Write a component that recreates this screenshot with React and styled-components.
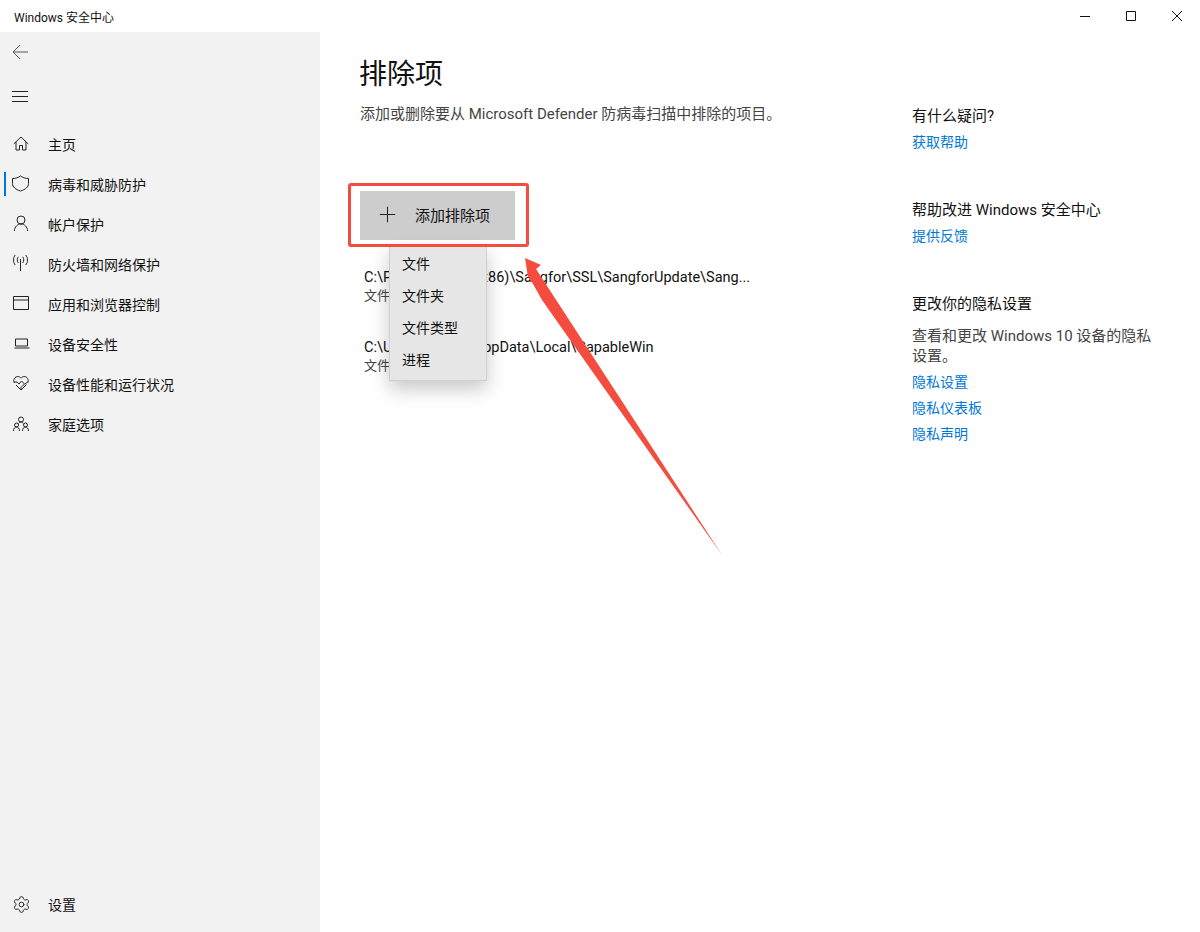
import React from "react";
import styled, { createGlobalStyle } from "styled-components";
import { Settings } from "lucide-react";

const GlobalStyle = createGlobalStyle`
  html, body {
    margin: 0;
    padding: 0;
    background: #fff;
  }
  body {
    font-family: Roboto, "Noto Sans CJK SC", sans-serif;
    color: #1a1a1a;
  }
`;

const Window = styled.div`
  position: relative;
  width: 1200px;
  height: 932px;
  display: flex;
  flex-direction: column;
  overflow: hidden;
  background: #fff;
`;

const TitleBar = styled.div`
  height: 32px;
  flex: none;
  display: flex;
  align-items: center;
  justify-content: space-between;
  padding-left: 14px;
`;

const TitleText = styled.span`
  font-size: 12px;
  color: #111;
`;

const WindowControls = styled.div`
  display: flex;
`;

const ControlButton = styled.div`
  width: 46px;
  height: 32px;
  display: flex;
  align-items: center;
  justify-content: center;
`;

const Body = styled.div`
  flex: 1;
  display: flex;
  min-height: 0;
`;

const Sidebar = styled.nav`
  width: 320px;
  flex: none;
  background: #f2f2f2;
  display: flex;
  flex-direction: column;
  padding-bottom: 7px;
  box-sizing: border-box;
`;

const IconRow = styled.div`
  height: 40px;
  display: flex;
  align-items: center;
  padding-left: 12px;
  margin-bottom: ${(p) => p.$gap || 0}px;
`;

const NavList = styled.div`
  display: flex;
  flex-direction: column;
  margin-top: 8px;
`;

const NavItem = styled.div`
  position: relative;
  height: 40px;
  display: flex;
  align-items: center;
  gap: 16px;
  padding-left: 12px;
  font-size: 14px;
  color: #111;
  ${(p) =>
    p.$active &&
    `
    &::before {
      content: "";
      position: absolute;
      left: 4px;
      top: 8px;
      width: 2px;
      height: 24px;
      background: #0078d7;
    }
  `}
`;

const NavFooter = styled(NavItem)`
  margin-top: auto;
  margin-bottom: 1px;
`;

const GearIcon = styled(Settings)`
  flex: none;
  margin-right: 1px;
`;

const Main = styled.main`
  flex: 1;
  display: flex;
  justify-content: space-between;
  padding: 18px 0 0 40px;
  min-width: 0;
`;

const Content = styled.div`
  width: 480px;
  display: flex;
  flex-direction: column;
`;

const Heading = styled.h1`
  margin: 0 0 0 -1px;
  font-size: 28px;
  font-weight: 400;
  line-height: 50px;
  color: #111;
`;

const Subtitle = styled.p`
  margin: 4px 0 0;
  font-size: 15px;
  line-height: 20px;
  color: #444;
  white-space: nowrap;
`;

const AddButton = styled.div`
  margin-top: 67px;
  width: 155px;
  height: 49px;
  display: flex;
  align-items: center;
  gap: 19px;
  padding: 0 0 2px 19px;
  box-sizing: border-box;
  background: #cdcdcd;
  font-size: 15px;
  color: #111;
`;

const ExclusionList = styled.div`
  display: flex;
  flex-direction: column;
  gap: 34px;
  margin-top: 28px;
  padding-left: 4px;
`;

const Exclusion = styled.div`
  display: flex;
  flex-direction: column;
`;

const ExclusionPath = styled.span`
  font-size: 14.5px;
  line-height: 20px;
  color: #111;
  white-space: nowrap;
`;

const ExclusionKind = styled.span`
  font-size: 13px;
  line-height: 16px;
  color: #444;
`;

const Aside = styled.aside`
  width: 288px;
  padding-top: 53px;
  display: flex;
  flex-direction: column;
  gap: 42px;
`;

const AsideBlock = styled.section`
  display: flex;
  flex-direction: column;
  align-items: flex-start;
`;

const AsideTitle = styled.h2`
  margin: 0;
  font-size: 15px;
  font-weight: 400;
  line-height: 26px;
  color: #111;
`;

const AsideText = styled.p`
  margin: 9px 0 3px;
  width: 248px;
  font-size: 15px;
  line-height: 20px;
  color: #444;
`;

const AsideLink = styled.a`
  font-size: 14px;
  line-height: 26px;
  color: #0078d7;
`;

const FlyoutMenu = styled.div`
  position: absolute;
  left: 389px;
  top: 246px;
  width: 98px;
  height: 135px;
  box-sizing: border-box;
  background: #e6e6e6;
  border: 1px solid #cfcfcf;
  box-shadow: 0 8px 18px rgba(0, 0, 0, 0.22);
  display: flex;
  flex-direction: column;
`;

const FlyoutItem = styled.div`
  height: 32px;
  display: flex;
  align-items: center;
  padding-left: 12px;
  font-size: 14px;
  color: #111;
`;

const Highlight = styled.div`
  position: absolute;
  left: 348px;
  top: 183px;
  width: 181px;
  height: 64px;
  box-sizing: border-box;
  border: 3px solid #f44d3f;
  border-radius: 3px;
`;

const ArrowSvg = styled.svg`
  position: absolute;
  left: 500px;
  top: 240px;
  pointer-events: none;
`;

const IconSvg = styled.svg`
  flex: none;
`;

const Icon = ({ children, size = 20, weight = 1 }) => (
  <IconSvg
    width={size}
    height={size}
    viewBox="0 0 20 20"
    fill="none"
    stroke="#222"
    strokeWidth={weight}
  >
    {children}
  </IconSvg>
);

const icons = {
  home: <path d="M1.800 9.800 9 3l7.200 6.800M4 8v8h3.500v-4.500h3V16H14V8" />,
  shield: (
    <path d="M8.500 2c2 1.600 5 2.500 8 2.500v5c0 3.600-3 6-8 7.500-5-1.500-8-3.900-8-7.500v-5c3 0 6-.9 8-2.500Z" />
  ),
  user: (
    <path d="M9 2a4 4 0 1 0 0 8 4 4 0 0 0 0-8ZM2.300 17c.3-4 3-7 6.700-7s6.400 3 6.700 7" />
  ),
  wifi: (
    <path d="M8.500 5v12M6.300 2.800c-1.400 1.800-1.400 4.400 0 6.200M10.700 2.800c1.400 1.800 1.400 4.400 0 6.200M3.300 1c-2.400 2.700-2.400 7.300 0 10M13.700 1c2.400 2.700 2.400 7.300 0 10" />
  ),
  browser: <path d="M1.500 2.500h15v13h-15zM1.500 6h15" />,
  laptop: <path d="M3.500 5h12v7h-12zM2.500 14h15" />,
  heart: (
    <path d="M2.200 8.800C.8 5.800 2.800 2.500 5.800 2.500c1.400 0 2.400.7 3.200 1.700.8-1 1.800-1.700 3.200-1.700 3 0 5 3.300 3.600 6.300M2 8h3l2 2 2.500-3 3 3-3.500 3.500L9 16l-5-5M13 10l2.500-2H16M9 16l5.500-5.500" />
  ),
  family: (
    <>
      <circle cx="9" cy="5.500" r="2.500" />
      <circle cx="4.500" cy="11" r="2" />
      <circle cx="13.500" cy="11" r="2" />
      <path d="M1.500 17c0-2.500 1.300-4 3-4s3 1.500 3 4M10.500 17c0-2.500 1.300-4 3-4s3 1.500 3 4M6.500 9.500c.6-.8 1.500-1.500 2.500-1.500s1.900.7 2.500 1.500" />
    </>
  ),
};

const navItems = [
  { icon: "home", label: "主页" },
  { icon: "shield", label: "病毒和威胁防护", active: true },
  { icon: "user", label: "帐户保护" },
  { icon: "wifi", label: "防火墙和网络保护" },
  { icon: "browser", label: "应用和浏览器控制" },
  { icon: "laptop", label: "设备安全性" },
  { icon: "heart", label: "设备性能和运行状况" },
  { icon: "family", label: "家庭选项" },
];

function App() {
  return (
    <Window>
      <GlobalStyle />
      <TitleBar>
        <TitleText>Windows 安全中心</TitleText>
        <WindowControls>
          <ControlButton>
            <svg width="10" height="10" viewBox="0 0 10 10" stroke="#111">
              <path d="M0 5.500h10" />
            </svg>
          </ControlButton>
          <ControlButton>
            <svg width="10" height="10" viewBox="0 0 10 10" fill="none" stroke="#111">
              <path d="M.5.500h9v9h-9z" />
            </svg>
          </ControlButton>
          <ControlButton>
            <svg width="10" height="10" viewBox="0 0 10 10" stroke="#111">
              <path d="m0 0 10 10M10 0 0 10" />
            </svg>
          </ControlButton>
        </WindowControls>
      </TitleBar>
      <Body>
        <Sidebar>
          <IconRow $gap={4}>
            <Icon>
              <path d="M16 10H1M8 3 1 10l7 7" stroke="#555" />
            </Icon>
          </IconRow>
          <IconRow>
            <Icon>
              <path d="M0 5.500h16M0 10.500h16M0 15.500h16" />
            </Icon>
          </IconRow>
          <NavList>
            {navItems.map((item) => (
              <NavItem key={item.label} $active={item.active}>
                <Icon>{icons[item.icon]}</Icon>
                {item.label}
              </NavItem>
            ))}
          </NavList>
          <NavFooter>
            <GearIcon size={19} strokeWidth={1.2} color="#222" />
            设置
          </NavFooter>
        </Sidebar>
        <Main>
          <Content>
            <Heading>排除项</Heading>
            <Subtitle>添加或删除要从 Microsoft Defender 防病毒扫描中排除的项目。</Subtitle>
            <AddButton>
              <Icon size={17} weight={1.2}>
                <path d="M10 1v18M1 10h18" />
              </Icon>
              添加排除项
            </AddButton>
            <ExclusionList>
              <Exclusion>
                <ExclusionPath>C:\Program Files (x86)\Sangfor\SSL\SangforUpdate\Sang...</ExclusionPath>
                <ExclusionKind>文件夹</ExclusionKind>
              </Exclusion>
              <Exclusion>
                <ExclusionPath>C:\Users\Admin\AppData\Local\CapableWin</ExclusionPath>
                <ExclusionKind>文件夹</ExclusionKind>
              </Exclusion>
            </ExclusionList>
          </Content>
          <Aside>
            <AsideBlock>
              <AsideTitle>有什么疑问?</AsideTitle>
              <AsideLink>获取帮助</AsideLink>
            </AsideBlock>
            <AsideBlock>
              <AsideTitle>帮助改进 Windows 安全中心</AsideTitle>
              <AsideLink>提供反馈</AsideLink>
            </AsideBlock>
            <AsideBlock>
              <AsideTitle>更改你的隐私设置</AsideTitle>
              <AsideText>查看和更改 Windows 10 设备的隐私设置。</AsideText>
              <AsideLink>隐私设置</AsideLink>
              <AsideLink>隐私仪表板</AsideLink>
              <AsideLink>隐私声明</AsideLink>
            </AsideBlock>
          </Aside>
        </Main>
      </Body>
      <FlyoutMenu>
        <FlyoutItem>文件</FlyoutItem>
        <FlyoutItem>文件夹</FlyoutItem>
        <FlyoutItem>文件类型</FlyoutItem>
        <FlyoutItem>进程</FlyoutItem>
      </FlyoutMenu>
      <Highlight />
      <ArrowSvg width="240" height="330" viewBox="0 0 240 330">
        <path d="M25 18 41 25 36 29 222 315 75 107 42 60 33 44 28 37Z" fill="#f44d3f" />
      </ArrowSvg>
    </Window>
  );
}

export default App;
